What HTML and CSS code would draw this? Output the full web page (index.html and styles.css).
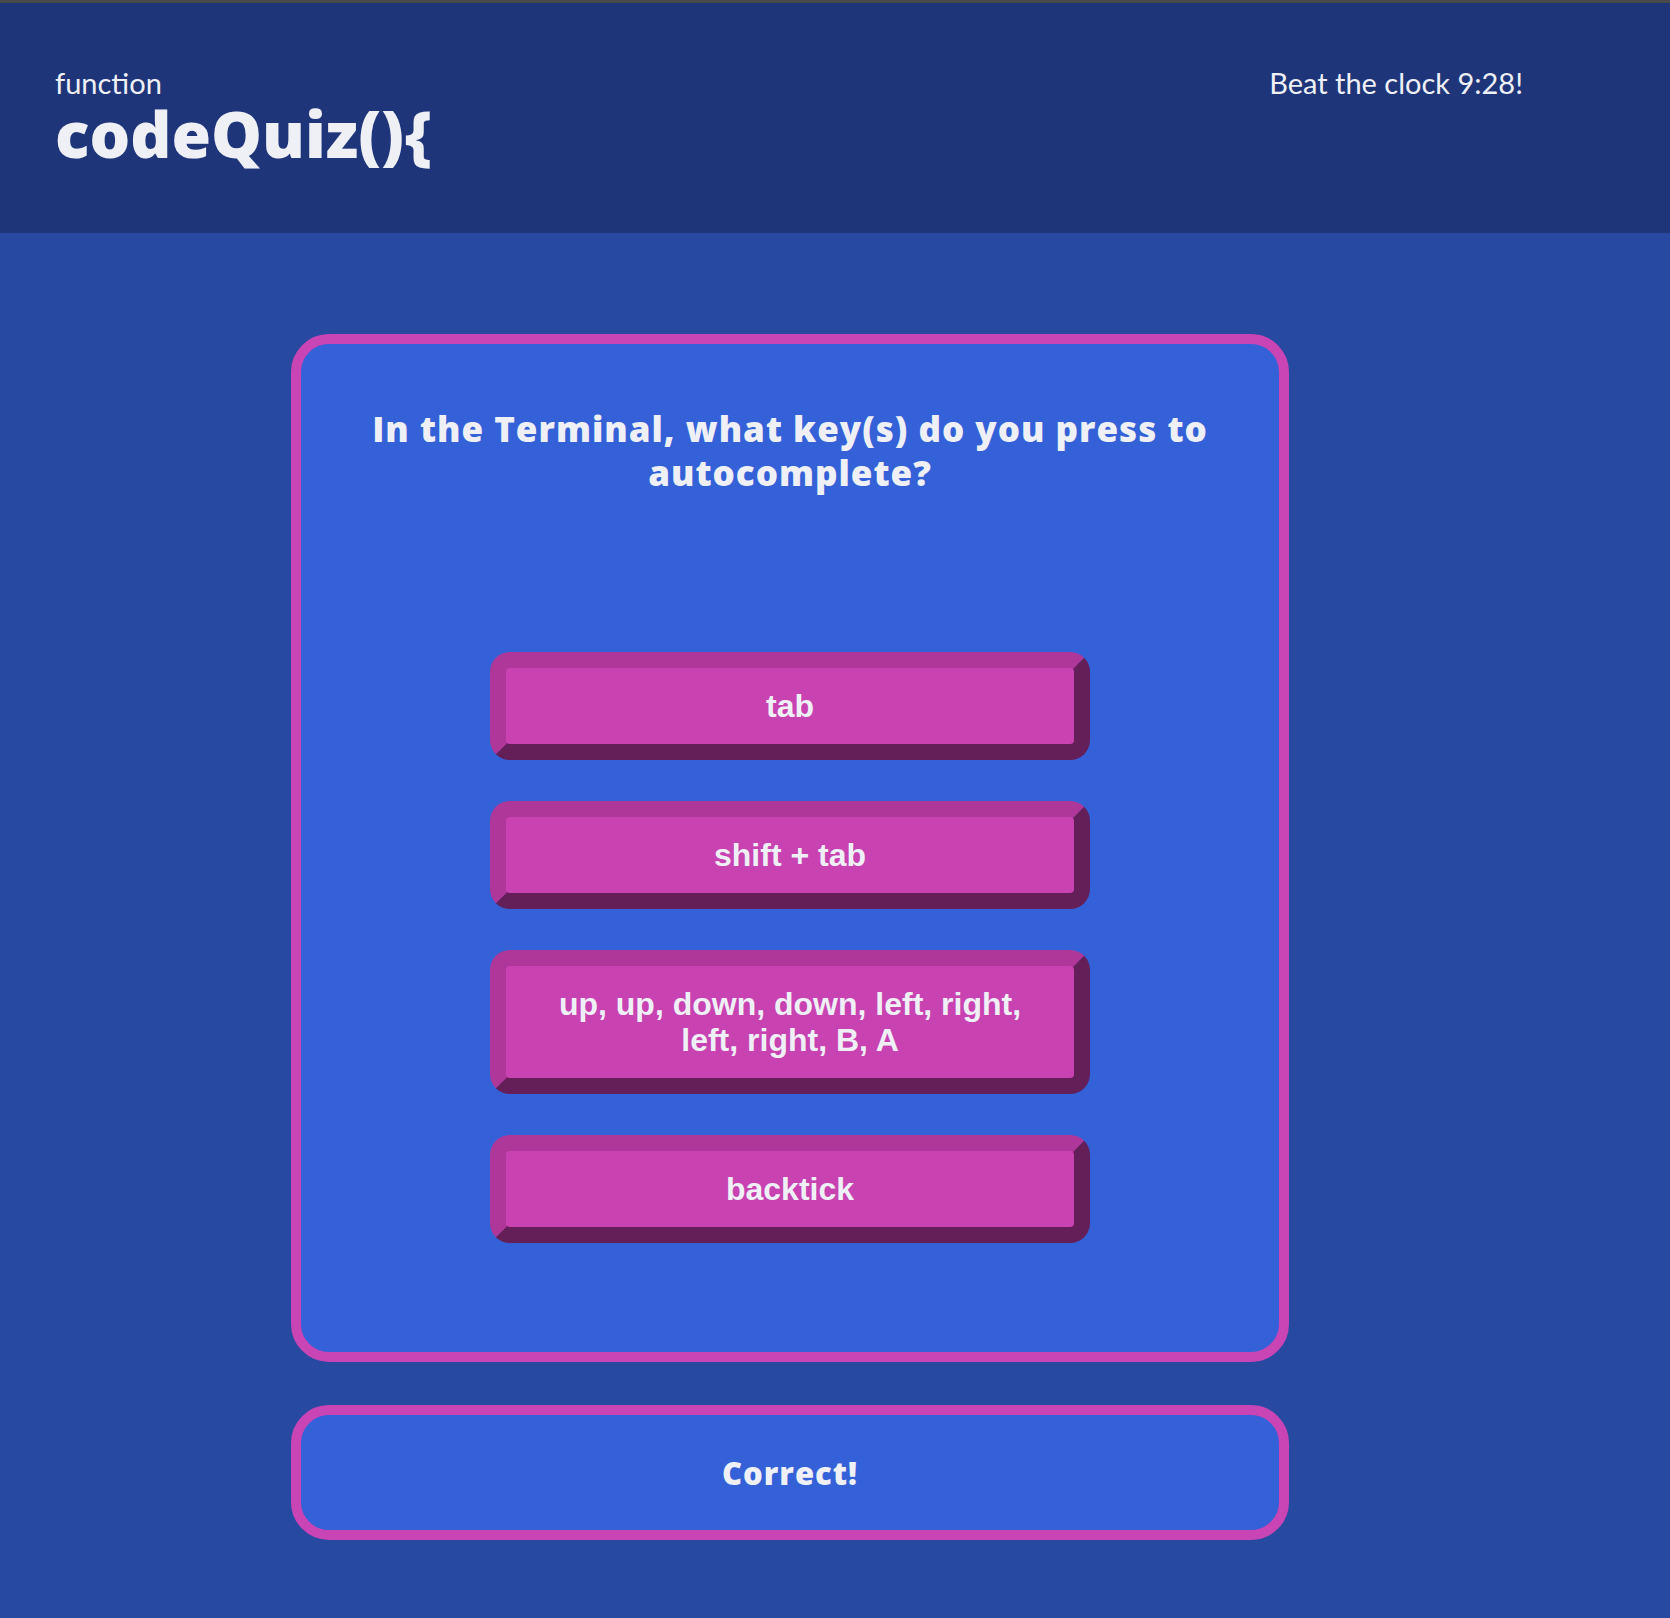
FILE: index.html
```html
<!DOCTYPE html>
<html lang="en">
<head>
<meta charset="utf-8">
<title>codeQuiz</title>
<link rel="stylesheet" href="styles.css">
</head>
<body>
<header class="topbar">
  <div class="brand">
    <div class="brand-fn">function</div>
    <div class="brand-name">codeQuiz(){</div>
  </div>
  <div class="timer">Beat the clock 9:28!</div>
</header>
<main class="stage">
  <section class="card">
    <h2 class="question">In the Terminal, what key(s) do you press to autocomplete?</h2>
    <div class="answers">
      <button class="answer">tab</button>
      <button class="answer">shift + tab</button>
      <button class="answer">up, up, down, down, left, right,<br>left, right, B, A</button>
      <button class="answer">backtick</button>
    </div>
  </section>
  <section class="feedback">Correct!</section>
</main>
</body>
</html>
```

FILE: styles.css
```css
html, body {
  margin: 0;
  padding: 0;
}
body {
  background: #2849a0;
  color: #eef0f6;
  font-family: "Lato", "Open Sans", sans-serif;
  border-top: 3px solid #4a4a4a;
  min-height: 1615px;
}
.topbar {
  background: #1f3579;
  height: 230px;
  display: flex;
  justify-content: space-between;
  align-items: flex-start;
  padding: 0 147px 0 55px;
  box-sizing: border-box;
}
.brand {
  padding-top: 64px;
}
.brand-fn {
  font-size: 29px;
  line-height: 32px;
}
.brand-name {
  font-family: "Open Sans", "Lato", sans-serif;
  font-size: 64px;
  font-weight: 800;
  line-height: 70px;
  letter-spacing: 0;
}
.timer {
  padding-top: 62px;
  font-size: 29px;
  line-height: 36px;
}
.stage {
  padding: 101px 0 60px 291px;
}
.card {
  width: 998px;
  box-sizing: border-box;
  background: #3561d8;
  border: 10px solid #c944b4;
  border-radius: 38px;
  padding: 63px 30px 109px;
}
.question {
  margin: 0;
  text-align: center;
  font-family: "Open Sans", "Lato", sans-serif;
  font-size: 35px;
  line-height: 44px;
  font-weight: 800;
  letter-spacing: 1px;
}
.answers {
  margin-top: 157px;
  display: flex;
  flex-direction: column;
  align-items: center;
  gap: 41px;
}
.answer {
  width: 600px;
  box-sizing: border-box;
  background: #c942b2;
  color: #eef0f6;
  font-family: "Liberation Sans", Arial, sans-serif;
  font-weight: 700;
  font-size: 32px;
  line-height: 36px;
  padding: 20px 10px;
  border: 16px solid;
  border-color: #b0379a #641e58 #641e58 #b0379a;
  border-radius: 20px;
  text-align: center;
}
.feedback {
  margin-top: 43px;
  width: 998px;
  height: 135px;
  box-sizing: border-box;
  background: #3561d8;
  border: 10px solid #c944b4;
  border-radius: 38px;
  display: flex;
  align-items: center;
  justify-content: center;
  font-family: "Open Sans", "Lato", sans-serif;
  font-size: 31px;
  font-weight: 800;
  letter-spacing: 1px;
}
```
